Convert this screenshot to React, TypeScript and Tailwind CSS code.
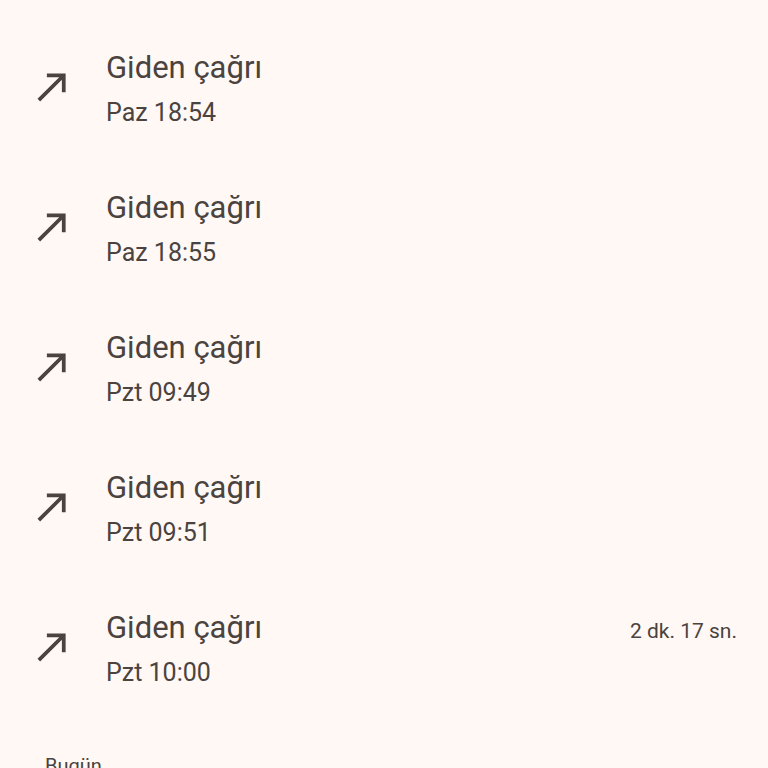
const calls = [
  { day: "Paz 18:54" },
  { day: "Paz 18:55" },
  { day: "Pzt 09:49" },
  { day: "Pzt 09:51" },
  { day: "Pzt 10:00", duration: "2 dk. 17 sn." },
];

function CallMade() {
  return (
    <svg viewBox="0 0 24 24" className="h-[45px] w-[45px] fill-[#4a4340]">
      <path d="M9 5v2h6.59L4 18.59 5.41 20 17 8.41V15h2V5z" />
    </svg>
  );
}

export default function App() {
  return (
    <div className="h-[768px] w-[768px] overflow-hidden bg-[#fff8f5] text-[#4a4340] font-['Roboto',sans-serif]">
      {calls.map((c, i) => (
        <div key={i} className="flex h-[140px]">
          <div className="w-[106px] shrink-0 pl-[30px] pt-[64px]">
            <CallMade />
          </div>
          <div className="flex-1 pt-[48px] pr-[31px]">
            <div className="flex items-baseline justify-between">
              <span className="text-[31px] leading-[40px]">Giden çağrı</span>
              {c.duration && <span className="text-[21px]">{c.duration}</span>}
            </div>
            <div className="mt-[9px] text-[25px] leading-[32px]">{c.day}</div>
          </div>
        </div>
      ))}
      <div className="pl-[45px] pt-[52px] text-[20px] leading-[28px]">Bugün</div>
    </div>
  );
}
